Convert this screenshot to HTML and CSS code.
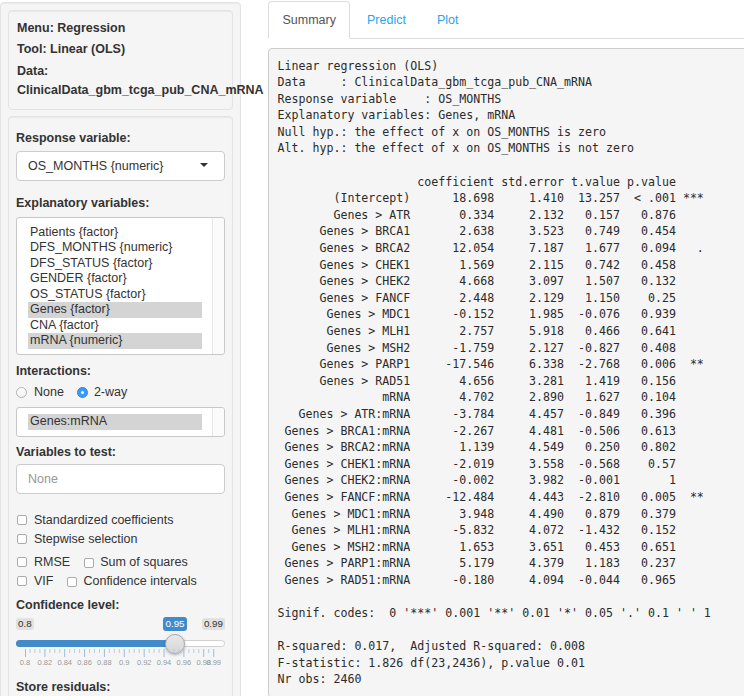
FILE: index.html
```html
<!DOCTYPE html>
<html>
<head>
<meta charset="utf-8">
<title>Regression</title>
<link rel="stylesheet" href="styles.css">
</head>
<body>
<div class="page">
  <aside class="sidebar">
    <div class="well info">
      <p class="i1">Menu: Regression</p>
      <p class="i2">Tool: Linear (OLS)</p>
      <p class="i3">Data:</p>
      <p class="i4">ClinicalData_gbm_tcga_pub_CNA_mRNA</p>
    </div>
    <div class="well controls">
      <label class="ctl-label">Response variable:</label>
      <div class="select"><span>OS_MONTHS {numeric}</span><span class="caret"></span></div>

      <label class="ctl-label gap13">Explanatory variables:</label>
      <div class="listbox tall">
        <div class="items">
          <div class="opt">Patients {factor}</div>
          <div class="opt">DFS_MONTHS {numeric}</div>
          <div class="opt">DFS_STATUS {factor}</div>
          <div class="opt">GENDER {factor}</div>
          <div class="opt">OS_STATUS {factor}</div>
          <div class="opt sel">Genes {factor}</div>
          <div class="opt">CNA {factor}</div>
          <div class="opt sel">mRNA {numeric}</div>
        </div>
        <div class="gutter"></div>
      </div>

      <label class="ctl-label gap7">Interactions:</label>
      <div class="radios">
        <span class="radio"><span class="dot"></span><span class="rtext">None</span></span>
        <span class="radio"><span class="dot on"></span><span class="rtext r2">2-way</span></span>
      </div>
      <div class="listbox short">
        <div class="items">
          <div class="opt sel">Genes:mRNA</div>
        </div>
        <div class="gutter"></div>
      </div>

      <label class="ctl-label gap6">Variables to test:</label>
      <div class="textin">None</div>

      <div class="checks">
        <div class="chk-row r1"><span class="chk"><span class="box"></span><span class="ctext">Standardized coefficients</span></span></div>
        <div class="chk-row r2"><span class="chk"><span class="box"></span><span class="ctext">Stepwise selection</span></span></div>
        <div class="chk-row r3"><span class="chk"><span class="box"></span><span class="ctext">RMSE</span></span><span class="chk second"><span class="box"></span><span class="ctext">Sum of squares</span></span></div>
        <div class="chk-row r4"><span class="chk"><span class="box"></span><span class="ctext">VIF</span></span><span class="chk second"><span class="box"></span><span class="ctext">Confidence intervals</span></span></div>
      </div>

      <label class="ctl-label gap6">Confidence level:</label>
      <div class="slider">
        <div class="irs-labels">
          <span class="irs-minmax">0.8</span>
          <span class="irs-minmax">0.99</span>
          <span class="irs-value">0.95</span>
        </div>
        <div class="irs-track">
          <div class="irs-fill" style="width:158px"></div>
          <div class="irs-handle"></div>
        </div>
        <div class="irs-grid">
          <svg class="ticks" width="209" height="9" viewBox="0 0 209 9">
            <path class="major" d="M9.5 0v8M28.9 0v8M48.7 0v8M68.6 0v8M88.4 0v8M108.3 0v8M128.2 0v8M148 0v8M167.9 0v8M187.7 0v8M197.7 0v8"/>
            <path class="minor" d="M14 0v4M18.9 0v4M23.9 0v4M33.9 0v4M38.8 0v4M43.8 0v4M53.7 0v4M58.6 0v4M63.6 0v4M73.6 0v4M78.5 0v4M83.5 0v4M93.4 0v4M98.3 0v4M103.3 0v4M113.3 0v4M118.2 0v4M123.2 0v4M133.2 0v4M138.1 0v4M143.1 0v4M153 0v4M157.9 0v4M162.9 0v4M172.9 0v4M177.8 0v4M182.8 0v4M192.7 0v4"/>
          </svg>
          <span class="gl" style="left:9px">0.8</span>
          <span class="gl" style="left:28.9px">0.82</span>
          <span class="gl" style="left:48.7px">0.84</span>
          <span class="gl" style="left:68.6px">0.86</span>
          <span class="gl" style="left:88.4px">0.88</span>
          <span class="gl" style="left:108.3px">0.9</span>
          <span class="gl" style="left:128.2px">0.92</span>
          <span class="gl" style="left:148px">0.94</span>
          <span class="gl" style="left:167.9px">0.96</span>
          <span class="gl" style="left:187.7px">0.98</span>
          <span class="gl" style="left:197.7px">0.99</span>
        </div>
      </div>

      <label class="ctl-label">Store residuals:</label>
    </div>
  </aside>

  <main class="main">
    <ul class="tabs">
      <li class="tab active">Summary</li>
      <li class="tab">Predict</li>
      <li class="tab">Plot</li>
    </ul>
<pre class="output">Linear regression (OLS)
Data     : ClinicalData_gbm_tcga_pub_CNA_mRNA
Response variable    : OS_MONTHS
Explanatory variables: Genes, mRNA
Null hyp.: the effect of x on OS_MONTHS is zero
Alt. hyp.: the effect of x on OS_MONTHS is not zero

                    coefficient std.error t.value p.value
        (Intercept)      18.698     1.410  13.257  &lt; .001 ***
        Genes &gt; ATR       0.334     2.132   0.157   0.876
      Genes &gt; BRCA1       2.638     3.523   0.749   0.454
      Genes &gt; BRCA2      12.054     7.187   1.677   0.094   .
      Genes &gt; CHEK1       1.569     2.115   0.742   0.458
      Genes &gt; CHEK2       4.668     3.097   1.507   0.132
      Genes &gt; FANCF       2.448     2.129   1.150    0.25
       Genes &gt; MDC1      -0.152     1.985  -0.076   0.939
       Genes &gt; MLH1       2.757     5.918   0.466   0.641
       Genes &gt; MSH2      -1.759     2.127  -0.827   0.408
      Genes &gt; PARP1     -17.546     6.338  -2.768   0.006  **
      Genes &gt; RAD51       4.656     3.281   1.419   0.156
               mRNA       4.702     2.890   1.627   0.104
   Genes &gt; ATR:mRNA      -3.784     4.457  -0.849   0.396
 Genes &gt; BRCA1:mRNA      -2.267     4.481  -0.506   0.613
 Genes &gt; BRCA2:mRNA       1.139     4.549   0.250   0.802
 Genes &gt; CHEK1:mRNA      -2.019     3.558  -0.568    0.57
 Genes &gt; CHEK2:mRNA      -0.002     3.982  -0.001       1
 Genes &gt; FANCF:mRNA     -12.484     4.443  -2.810   0.005  **
  Genes &gt; MDC1:mRNA       3.948     4.490   0.879   0.379
  Genes &gt; MLH1:mRNA      -5.832     4.072  -1.432   0.152
  Genes &gt; MSH2:mRNA       1.653     3.651   0.453   0.651
 Genes &gt; PARP1:mRNA       5.179     4.379   1.183   0.237
 Genes &gt; RAD51:mRNA      -0.180     4.094  -0.044   0.965

Signif. codes:  0 '***' 0.001 '**' 0.01 '*' 0.05 '.' 0.1 ' ' 1

R-squared: 0.017,  Adjusted R-squared: 0.008
F-statistic: 1.826 df(23,2436), p.value 0.01
Nr obs: 2460</pre>
  </main>
</div>
</body>
</html>
```
FILE: styles.css
```css
html, body {
  margin: 0;
  padding: 0;
  width: 744px;
  height: 696px;
  overflow: hidden;
  background: #fff;
}
body {
  font-family: "Liberation Sans", Arial, sans-serif;
  font-size: 12.5px;
  line-height: 18px;
  color: #333;
}
.page {
  display: flex;
  align-items: flex-start;
}

/* ---------- sidebar ---------- */
.sidebar {
  flex: 0 0 auto;
  width: 241px;
  box-sizing: border-box;
  margin-top: 2px;
  padding: 7px;
  background: #f5f5f5;
  border: 1px solid #e3e3e3;
  border-radius: 4px;
  box-shadow: inset 0 1px 1px rgba(0,0,0,.05);
}
.well {
  background: #f5f5f5;
  border: 1px solid #e3e3e3;
  border-radius: 4px;
  box-shadow: inset 0 1px 1px rgba(0,0,0,.05);
}
.info {
  padding: 8px 8px 10px;
}
.info p {
  margin: 0;
  font-weight: bold;
  white-space: nowrap;
}
.info .i1 { margin-bottom: 3px; }
.info .i2 { margin-bottom: 4px; }
.info .i3 { margin-bottom: 1px; }

.controls {
  margin-top: 6px;
  padding: 12px 7px 20px;
}
.ctl-label {
  display: block;
  font-weight: bold;
  margin: 0;
}
.gap13 { margin-top: 13px; }
.gap7 { margin-top: 7px; }
.gap6 { margin-top: 6px; }

.select {
  margin-top: 4px;
  height: 30px;
  box-sizing: border-box;
  border: 1px solid #ccc;
  border-radius: 4px;
  background: #fff;
  padding: 0 16px 0 11px;
  display: flex;
  align-items: center;
  justify-content: space-between;
}
.caret {
  width: 0;
  height: 0;
  border-left: 4px solid transparent;
  border-right: 4px solid transparent;
  border-top: 4px solid #333;
  margin-top: -2px;
}

.listbox {
  box-sizing: border-box;
  border: 1px solid #c8c8c8;
  border-radius: 3px;
  background: #fff;
  display: flex;
}
.listbox.tall {
  margin-top: 5px;
  height: 138px;
}
.listbox.short {
  margin-top: 6px;
  height: 30px;
}
.items {
  flex: 1;
  padding: 6.5px 10px 0 11px;
  overflow: hidden;
}
.listbox.short .items {
  padding-top: 6px;
}
.opt {
  height: 15.5px;
  line-height: 15.5px;
  padding-left: 2px;
  white-space: nowrap;
}
.opt.sel {
  background: #d4d4d4;
}
.gutter {
  width: 11px;
  border-left: 1px solid #e6e6e6;
  background: #fbfbfb;
  border-radius: 0 3px 3px 0;
}

.radios {
  margin-top: 3px;
  display: flex;
  align-items: center;
  height: 18px;
}
.radio {
  display: inline-flex;
  align-items: center;
  margin-right: 13px;
}
.dot {
  width: 11px;
  height: 11px;
  box-sizing: border-box;
  border-radius: 50%;
  border: 1px solid #b2b2b2;
  background: linear-gradient(#fff, #f2f2f2);
  position: relative;
}
.dot.on {
  background: #3b99fc;
  border-color: #2f87e8;
}
.dot.on::after {
  content: "";
  position: absolute;
  left: 3px;
  top: 3px;
  width: 3px;
  height: 3px;
  border-radius: 50%;
  background: #fff;
}
.rtext { margin-left: 7px; }
.rtext.r2 { margin-left: 6px; }

.textin {
  margin-top: 3px;
  height: 30px;
  box-sizing: border-box;
  border: 1px solid #ccc;
  border-radius: 4px;
  background: #fff;
  padding-left: 11px;
  display: flex;
  align-items: center;
  color: #999;
}

.checks { margin-top: 17px; }
.chk-row {
  display: flex;
  align-items: center;
  height: 18px;
}
.chk-row.r2 { margin-top: 1px; }
.chk-row.r3 { margin-top: 5px; }
.chk-row.r4 { margin-top: 1px; }
.chk {
  display: inline-flex;
  align-items: center;
  margin-right: 14px;
}
.box {
  width: 10px;
  height: 10px;
  box-sizing: border-box;
  margin-left: 1px;
  border: 1px solid #ababab;
  border-radius: 2px;
  background: #fff;
}
.chk.second .box {
  margin-top: 2px;
  margin-left: 0;
}
.ctext { margin-left: 7px; }
.chk.second .ctext { margin-left: 6px; }

/* slider */
.slider {
  height: 60px;
  position: relative;
}
.irs-labels {
  position: relative;
  margin-top: 4px;
  height: 14px;
  display: flex;
  justify-content: space-between;
  font-size: 9.8px;
  line-height: 12px;
}
.irs-minmax {
  background: #e1e1e1;
  color: #333;
  border-radius: 3px;
  padding: 0 2px;
  height: 12px;
}
.irs-value {
  position: absolute;
  left: 147px;
  top: -1px;
  background: #428bca;
  color: #fff;
  border-radius: 3px;
  padding: 1px 2.5px;
  line-height: 12px;
}
.irs-track {
  position: relative;
  margin-top: 8px;
  height: 7px;
  box-sizing: border-box;
  border: 1px solid #d0d0d0;
  border-radius: 4px;
  background: #fff;
}
.irs-fill {
  position: absolute;
  left: -1px;
  top: -1px;
  height: 7px;
  background: #428bca;
  border-radius: 4px 0 0 4px;
}
.irs-handle {
  position: absolute;
  left: 148px;
  top: -7px;
  width: 20px;
  height: 20px;
  box-sizing: border-box;
  border-radius: 50%;
  background: linear-gradient(#e8e8e8, #d6d6d6);
  border: 1px solid #a9a9a9;
  box-shadow: 0 1px 3px rgba(0,0,0,.3);
}
.irs-grid {
  position: relative;
  margin-top: 2px;
  height: 20px;
}
.ticks {
  display: block;
  stroke-width: 1;
}
.ticks .major { stroke: #9bbbe0; }
.ticks .minor { stroke: #b6cde6; }
.gl {
  position: absolute;
  top: 9px;
  transform: translateX(-50%);
  font-size: 7.5px;
  line-height: 9px;
  color: #999;
  white-space: nowrap;
}

/* ---------- main ---------- */
.main {
  flex: 0 0 auto;
  width: 560px;
  margin-left: 27px;
}
.tabs {
  display: flex;
  list-style: none;
  margin: 1px 0 0;
  padding: 0;
  border-bottom: 1px solid #ddd;
}
.tab {
  margin-right: 2px;
  margin-bottom: -1px;
  padding: 9px 13.5px;
  line-height: 18px;
  border: 1px solid transparent;
  border-radius: 4px 4px 0 0;
  color: #2fa4e7;
}
.tab.active {
  color: #555;
  background: #fff;
  border-color: #ddd;
  border-bottom-color: #fff;
}
.output {
  margin: 9px 0 0;
  padding: 8.5px;
  font-family: "DejaVu Sans Mono", "Liberation Mono", monospace;
  font-size: 11.62px;
  line-height: 16.6px;
  color: #2b2b2b;
  background: #f5f5f5;
  border: 1px solid #ccc;
  border-radius: 4px;
  white-space: pre;
}
```
